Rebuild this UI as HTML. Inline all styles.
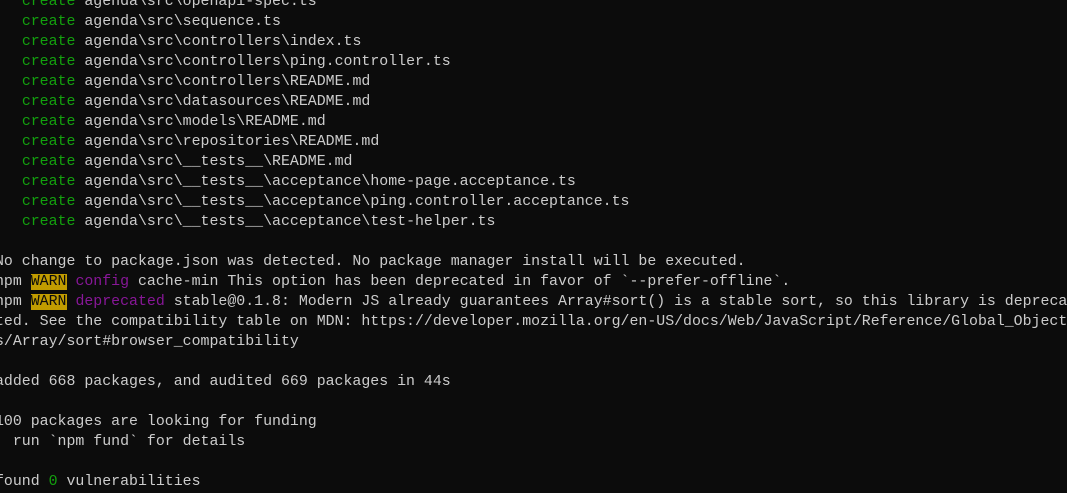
<!DOCTYPE html>
<html><head><meta charset="utf-8"><style>
html,body{margin:0;padding:0;background:#0c0c0c;width:1067px;height:493px;overflow:hidden}
pre{position:absolute;left:-5px;top:-8px;margin:0;font-family:"Liberation Mono",monospace;font-size:14.9px;line-height:20px;color:#cccccc;white-space:pre}
.g{color:#13a10e}.p{color:#881798}.w{background:#c19c00;color:#0c0c0c}
</style></head><body><pre>   <span class="g">create</span> agenda\src\openapi-spec.ts
   <span class="g">create</span> agenda\src\sequence.ts
   <span class="g">create</span> agenda\src\controllers\index.ts
   <span class="g">create</span> agenda\src\controllers\ping.controller.ts
   <span class="g">create</span> agenda\src\controllers\README.md
   <span class="g">create</span> agenda\src\datasources\README.md
   <span class="g">create</span> agenda\src\models\README.md
   <span class="g">create</span> agenda\src\repositories\README.md
   <span class="g">create</span> agenda\src\__tests__\README.md
   <span class="g">create</span> agenda\src\__tests__\acceptance\home-page.acceptance.ts
   <span class="g">create</span> agenda\src\__tests__\acceptance\ping.controller.acceptance.ts
   <span class="g">create</span> agenda\src\__tests__\acceptance\test-helper.ts

No change to package.json was detected. No package manager install will be executed.
npm <span class="w">WARN</span> <span class="p">config</span> cache-min This option has been deprecated in favor of `--prefer-offline`.
npm <span class="w">WARN</span> <span class="p">deprecated</span> stable@0.1.8: Modern JS already guarantees Array#sort() is a stable sort, so this library is deprecated.
ted. See the compatibility table on MDN: https://developer.mozilla.org/en-US/docs/Web/JavaScript/Reference/Global_Objects
s/Array/sort#browser_compatibility

added 668 packages, and audited 669 packages in 44s

100 packages are looking for funding
  run `npm fund` for details

found <span class="g">0</span> vulnerabilities
</pre></body></html>
